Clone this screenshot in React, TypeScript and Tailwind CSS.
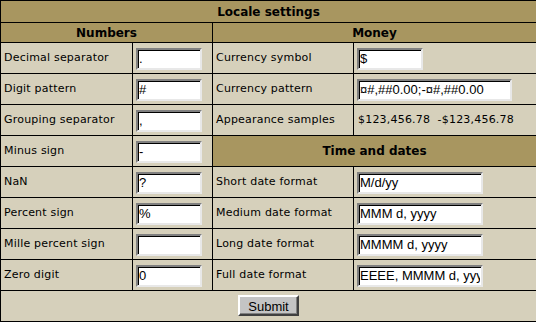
import React from 'react'

const label = 'px-[3px] border border-black text-[11px] tracking-[0.2px] text-black whitespace-nowrap'
const head = 'bg-[#a89660] border border-black text-center font-bold text-[12px] text-black'

function Field({ value, w }: { value: string; w: string }) {
  return (
    <input
      type="text"
      defaultValue={value}
      className={`${w} h-[22px] bg-white px-[1px] text-[13px] text-black border-2 border-t-[#808080] border-l-[#808080] border-b-[#e8e8e8] border-r-[#e8e8e8] shadow-[inset_1px_1px_0_#000] outline-none`}
      style={{ fontFamily: '"Liberation Sans", Arial, sans-serif' }}
    />
  )
}

function Row({
  left,
  leftValue,
  children,
}: {
  left: string
  leftValue: string
  children: React.ReactNode
}) {
  return (
    <tr className="h-[31px]">
      <td className={label}>{left}</td>
      <td className="px-[3px] border border-black">
        <Field value={leftValue} w="w-[66px]" />
      </td>
      {children}
    </tr>
  )
}

export default function App() {
  return (
    <div
      className="w-[536px] h-[322px] bg-[#d6d0bb]"
      style={{ fontFamily: '"DejaVu Sans", Verdana, sans-serif' }}
    >
      <table className="w-[536px] table-fixed border-collapse border border-black bg-[#d6d0bb]">
        <colgroup>
          <col className="w-[132px]" />
          <col className="w-[80px]" />
          <col className="w-[141px]" />
          <col className="w-[183px]" />
        </colgroup>
        <tbody>
          <tr className="h-[22px]">
            <td colSpan={4} className={head}>Locale settings</td>
          </tr>
          <tr className="h-[20px]">
            <td colSpan={2} className={head}>Numbers</td>
            <td colSpan={2} className={head}>Money</td>
          </tr>
          <Row left="Decimal separator" leftValue=".">
            <td className={label}>Currency symbol</td>
            <td className="px-[3px] border border-black">
              <Field value="$" w="w-[66px]" />
            </td>
          </Row>
          <Row left="Digit pattern" leftValue="#">
            <td className={label}>Currency pattern</td>
            <td className="px-[3px] border border-black">
              <Field value="¤#,##0.00;-¤#,##0.00" w="w-[155px]" />
            </td>
          </Row>
          <Row left="Grouping separator" leftValue=",">
            <td className={label}>Appearance samples</td>
            <td className={`${label} pl-[4px]`}>$123,456.78&nbsp;&nbsp;-$123,456.78</td>
          </Row>
          <Row left="Minus sign" leftValue="-">
            <td colSpan={2} className={head}>Time and dates</td>
          </Row>
          <Row left="NaN" leftValue="?">
            <td className={label}>Short date format</td>
            <td className="px-[3px] border border-black">
              <Field value="M/d/yy" w="w-[126px]" />
            </td>
          </Row>
          <Row left="Percent sign" leftValue="%">
            <td className={label}>Medium date format</td>
            <td className="px-[3px] border border-black">
              <Field value="MMM d, yyyy" w="w-[126px]" />
            </td>
          </Row>
          <Row left="Mille percent sign" leftValue="">
            <td className={label}>Long date format</td>
            <td className="px-[3px] border border-black">
              <Field value="MMMM d, yyyy" w="w-[126px]" />
            </td>
          </Row>
          <Row left="Zero digit" leftValue="0">
            <td className={label}>Full date format</td>
            <td className="px-[3px] border border-black">
              <Field value="EEEE, MMMM d, yyyy" w="w-[126px]" />
            </td>
          </Row>
          <tr className="h-[31px]">
            <td colSpan={4} className="border border-black text-center">
              <button
                type="button"
                className="w-[61px] h-[21px] bg-[#c4c4c4] text-[13px] text-black border-2 border-t-white border-l-white border-b-[#404040] border-r-[#404040] shadow-[inset_-1px_-1px_0_#808080]"
                style={{ fontFamily: '"Liberation Sans", Arial, sans-serif' }}
              >
                Submit
              </button>
            </td>
          </tr>
        </tbody>
      </table>
    </div>
  )
}
